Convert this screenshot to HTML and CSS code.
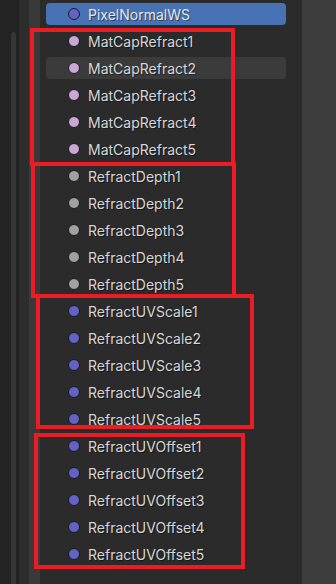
FILE: index.html
```
<!DOCTYPE html>
<html lang="en">
<head>
    <meta charset="UTF-8">
    <meta name="viewport" content="width=device-width, initial-scale=1.0">
    <title>Attributes</title>
    <link rel="stylesheet" href="styles.css">
</head>
<body>
    <div class="editor">
        <div class="gutter">
            <div class="scrollbar"></div>
        </div>
        <div class="gutter-mid"></div>
        <div class="gutter-edge"></div>
        <div class="panel">
            <ul class="attr-list">
                <li class="attr active"><span class="dot vector"></span>PixelNormalWS</li>
                <li class="attr"><span class="dot color"></span>MatCapRefract1</li>
                <li class="attr hover"><span class="dot color"></span>MatCapRefract2</li>
                <li class="attr"><span class="dot color"></span>MatCapRefract3</li>
                <li class="attr"><span class="dot color"></span>MatCapRefract4</li>
                <li class="attr"><span class="dot color"></span>MatCapRefract5</li>
                <li class="attr"><span class="dot float"></span>RefractDepth1</li>
                <li class="attr"><span class="dot float"></span>RefractDepth2</li>
                <li class="attr"><span class="dot float"></span>RefractDepth3</li>
                <li class="attr"><span class="dot float"></span>RefractDepth4</li>
                <li class="attr"><span class="dot float"></span>RefractDepth5</li>
                <li class="attr"><span class="dot vector"></span>RefractUVScale1</li>
                <li class="attr"><span class="dot vector"></span>RefractUVScale2</li>
                <li class="attr"><span class="dot vector"></span>RefractUVScale3</li>
                <li class="attr"><span class="dot vector"></span>RefractUVScale4</li>
                <li class="attr"><span class="dot vector"></span>RefractUVScale5</li>
                <li class="attr"><span class="dot vector"></span>RefractUVOffset1</li>
                <li class="attr"><span class="dot vector"></span>RefractUVOffset2</li>
                <li class="attr"><span class="dot vector"></span>RefractUVOffset3</li>
                <li class="attr"><span class="dot vector"></span>RefractUVOffset4</li>
                <li class="attr"><span class="dot vector"></span>RefractUVOffset5</li>
            </ul>
        </div>
        <div class="side"></div>

        <!-- red annotation boxes -->
        <div class="mark mark-matcap"></div>
        <div class="mark mark-depth"></div>
        <div class="mark mark-scale"></div>
        <div class="mark mark-offset"></div>
    </div>
</body>
</html>
```

FILE: styles.css
```
html, body {
    margin: 0;
    padding: 0;
    background-color: #2b2b2b;
}
body {
    font-family: Inter, "DejaVu Sans", sans-serif;
}
.editor {
    position: relative;
    display: flex;
    width: 336px;
    height: 584px;
    overflow: hidden;
}
.gutter {
    width: 19px;
    background-color: #232323;
    padding-top: 32px;
    box-sizing: border-box;
}
.scrollbar {
    width: 5px;
    height: 560px;
    margin-left: 11px;
    background-color: #363636;
    border-radius: 3px 3px 0 0;
}
.gutter-mid {
    width: 10px;
    background-color: #2d2d2d;
}
.gutter-edge {
    width: 11px;
    background-color: #393939;
}
.panel {
    width: 262px;
    background-color: #2b2b2b;
}
.side {
    width: 34px;
    background-color: #3d3d3d;
}
.attr-list {
    list-style: none;
    margin: 0;
    padding: 3px 0 0 6px;
    display: flex;
    flex-direction: column;
    gap: 5px;
}
.attr {
    display: flex;
    align-items: center;
    width: 240px;
    height: 22px;
    border-radius: 4px;
    font-size: 14px;
    color: #d6d6d6;
    text-shadow: 1px 1px 0 rgba(0, 0, 0, 0.45);
}
.attr.active {
    background-color: #4772b3;
    color: #e6e6e6;
}
.attr.hover {
    background-color: #3b3b3b;
}
.dot {
    width: 10px;
    height: 10px;
    border-radius: 50%;
    border: 1px solid #1a1a1a;
    margin-left: 22px;
    margin-right: 8px;
    flex-shrink: 0;
}
.dot.vector {
    background-color: #6363c7;
}
.dot.color {
    background-color: #cca6d6;
}
.dot.float {
    background-color: #a1a1a1;
}
.mark {
    position: absolute;
    border: 4px solid #ec1c24;
    box-sizing: border-box;
}
.mark-matcap {
    left: 30px;
    top: 28px;
    width: 205px;
    height: 138px;
}
.mark-depth {
    left: 31px;
    top: 162px;
    width: 205px;
    height: 136px;
}
.mark-scale {
    left: 36px;
    top: 294px;
    width: 218px;
    height: 135px;
}
.mark-offset {
    left: 34px;
    top: 433px;
    width: 211px;
    height: 136px;
}
```
